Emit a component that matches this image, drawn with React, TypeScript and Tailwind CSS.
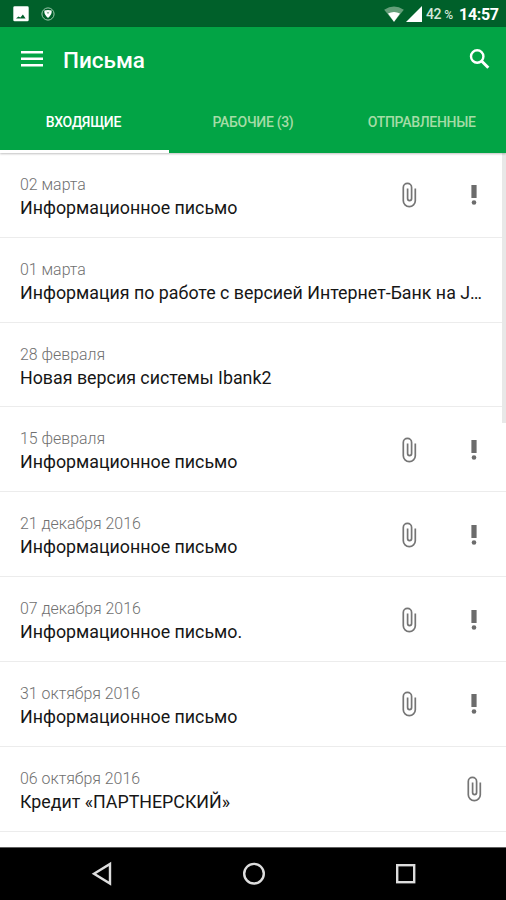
type Letter = { date: string; title: string; clip?: boolean; important?: boolean };

const letters: Letter[] = [
  { date: '02 марта', title: 'Информационное письмо', clip: true, important: true },
  { date: '01 марта', title: 'Информация по работе с версией Интернет-Банк на J…' },
  { date: '28 февраля', title: 'Новая версия системы Ibank2' },
  { date: '15 февраля', title: 'Информационное письмо', clip: true, important: true },
  { date: '21 декабря 2016', title: 'Информационное письмо', clip: true, important: true },
  { date: '07 декабря 2016', title: 'Информационное письмо.', clip: true, important: true },
  { date: '31 октября 2016', title: 'Информационное письмо', clip: true, important: true },
  { date: '06 октября 2016', title: 'Кредит «ПАРТНЕРСКИЙ»', clip: true },
];

function Clip() {
  return (
    <svg className="h-[26px] w-4 shrink-0" viewBox="0 0 16 26" fill="none" stroke="#757575" strokeWidth="1.7">
      <path d="M14.3 6.5V18.7A6 6 0 0 1 2.3 18.7V5.6A4.15 4.15 0 0 1 10.6 5.6V16.6A2 2 0 0 1 6.6 16.6V6.5" />
    </svg>
  );
}

function Important() {
  return (
    <svg className="h-[26px] w-4 shrink-0" viewBox="0 0 16 26" fill="#6c6c6c">
      <path d="M5.4 3H10.6V16H5.4Z" />
      <circle cx="8" cy="20.5" r="2.3" />
    </svg>
  );
}

function StatusBar() {
  return (
    <div className="flex h-[27px] shrink-0 items-center bg-[#00602a] pt-px">
      <svg className="ml-[13px] h-4 w-4" viewBox="0 0 16 16">
        <rect x="0.3" y="0.3" width="15.4" height="15" rx="1.4" fill="#fff" />
        <path d="M3 12.4L5.4 10.4L7.4 11.4L9.9 8.4L12.6 12.4Z" fill="#00602a" />
      </svg>
      <svg className="ml-[11px] h-4 w-4" viewBox="0 0 16 16">
        <circle cx="8" cy="8" r="6.1" fill="none" stroke="#9cc7ab" strokeWidth="1" />
        <path d="M4.3 4.6Q8 3.2 11.7 4.6Q12 9 8 12.1Q4 9 4.3 4.6Z" fill="#fff" />
        <path d="M7 5.8L8 7.6L9 5.8" fill="none" stroke="#5c9c73" strokeWidth="0.8" />
      </svg>
      <svg className="ml-auto h-4 w-5" viewBox="0 0 20 16">
        <path d="M0.2 3.8Q10-3 19.8 3.8L10 16Z" fill="#659f7a" />
        <path d="M4 7.6Q10 4.2 16 7.6L10 15.7Z" fill="#fff" />
      </svg>
      <svg className="ml-[2px] h-4 w-4" viewBox="0 0 16 16">
        <path d="M0 16L16 0V16Z" fill="#fff" />
      </svg>
      <span className="ml-[4px] w-[31px] whitespace-nowrap pt-px text-[14px] font-medium tracking-[-0.4px] text-[#d5e7db]">
        42 <span className="text-[12px]">%</span>
      </span>
      <span className="ml-[2px] mr-[8px] w-[39px] whitespace-nowrap pt-0.5 text-[16px] font-bold tracking-[-0.3px] text-white">14:57</span>
    </div>
  );
}

export default function App() {
  return (
    <div className="relative flex h-[900px] w-[506px] flex-col overflow-hidden bg-white font-['Roboto','Noto_Sans',sans-serif]">
      <StatusBar />
      <header className="z-10 flex h-[126px] shrink-0 flex-col bg-[#02a445] shadow-[0_1px_2px_rgba(0,0,0,0.25)]">
        <div className="flex h-[64px] items-center">
          <svg className="ml-[21px] h-4 w-[22px]" viewBox="0 0 22 16" fill="none" stroke="#fff" strokeWidth="2.5">
            <path d="M0 1.3H22M0 7.8H22M0 14.2H22" />
          </svg>
          <h1 className="ml-5 pt-px text-[22.5px] font-medium leading-7 text-white">Письма</h1>
          <svg className="ml-auto mr-[16px] h-[21px] w-[21px]" viewBox="0 0 21 21" fill="none" stroke="#fff">
            <circle cx="8.2" cy="7.5" r="6.2" strokeWidth="2.4" />
            <path d="M12.6 12L19.3 18.7" strokeWidth="3" />
          </svg>
        </div>
        <nav className="grid flex-1 grid-cols-3 text-center text-[14px] font-medium tracking-[-0.3px]">
          <div className="flex items-center justify-center border-b-[3px] border-white pr-[2px] pt-[3px] text-white">ВХОДЯЩИЕ</div>
          <div className="flex items-center justify-center text-[#a5dca7]">РАБОЧИЕ (3)</div>
          <div className="flex items-center justify-center text-[#a5dca7]">ОТПРАВЛЕННЫЕ</div>
        </nav>
      </header>
      <main className="flex h-[694px] shrink-0 flex-col overflow-hidden">
        {letters.map((letter) => (
          <article key={letter.date} className="flex h-[84.83px] shrink-0 items-center border-b border-[#ececec] pl-5 pr-4">
            <div className="min-w-0 flex-1 pt-[2px]">
              <div className="text-[15.9px] font-light leading-[23px] text-[#707070]">{letter.date}</div>
              <div className="whitespace-nowrap text-[17.82px] leading-[23px] text-[#161616]">{letter.title}</div>
            </div>
            <div className="mr-2 flex gap-[49px] pt-px">
              {letter.clip && <Clip />}
              {letter.important && <Important />}
            </div>
          </article>
        ))}
      </main>
      <div className="absolute right-0 top-[153px] h-[270px] w-1 bg-[#e8e8e8]" />
      <footer className="flex h-[53px] items-center border-t border-[#606060] bg-black">
        <svg className="h-full w-full" viewBox="0 0 506 52" fill="none" stroke="#ddd" strokeWidth="2.4">
          <path d="M94 25.7L110 16V35.5Z" />
          <circle cx="254" cy="25.7" r="9.8" />
          <rect x="397.2" y="17.2" width="17" height="17" />
        </svg>
      </footer>
    </div>
  );
}
